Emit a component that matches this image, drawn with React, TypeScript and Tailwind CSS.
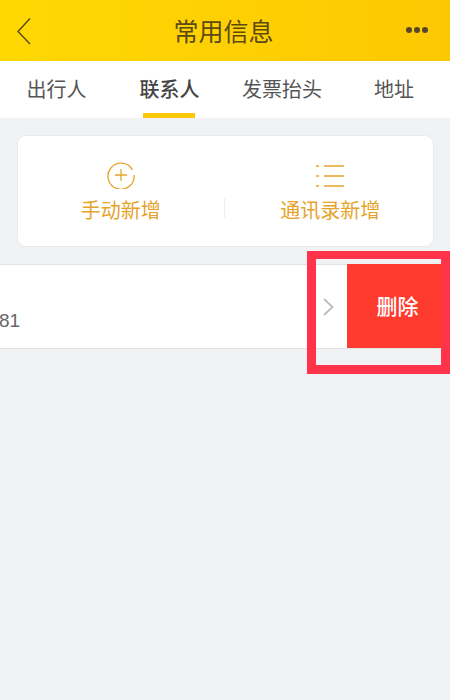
import React from "react";

const font = { fontFamily: '"Noto Sans CJK SC", "Liberation Sans", sans-serif' };

export default function App() {
  return (
    <div className="relative w-[450px] h-[700px] overflow-hidden bg-[#f1f2f4] flex flex-col" style={font}>
      <header className="h-[61px] shrink-0 bg-gradient-to-r from-[#ffd803] to-[#fdc802] flex items-center justify-between pl-[17px] pr-[22px]">
        <div className="w-[60px] flex">
          <svg width="14" height="28" viewBox="0 0 14 28" fill="none" stroke="#5a4a1a" strokeWidth="1.4">
            <path d="M13 1.5 1 14.5 13 27" />
          </svg>
        </div>
        <div className="text-[25px] leading-none text-[#5b4a12] pb-[1px] ml-[2px]">常用信息</div>
        <div className="w-[60px] flex justify-end gap-[2px] items-center pb-[2px]">
          <span className="w-[6px] h-[6px] rounded-full bg-[#54462a]" />
          <span className="w-[6px] h-[6px] rounded-full bg-[#54462a]" />
          <span className="w-[6px] h-[6px] rounded-full bg-[#54462a]" />
        </div>
      </header>

      <nav className="h-[57px] shrink-0 bg-white flex text-[20px] leading-none text-[#555555]">
        <div className="w-[113px] flex items-center justify-center pb-[1px]">出行人</div>
        <div className="relative w-[113px] flex items-center justify-center pb-[1px] text-[#444444] font-medium">
          联系人
          <span className="absolute bottom-0 left-[30px] w-[52px] h-[5px] bg-[#fcc707]" />
        </div>
        <div className="w-[112px] flex items-center justify-center pb-[1px]">发票抬头</div>
        <div className="w-[112px] flex items-center justify-center pb-[1px]">地址</div>
      </nav>

      <section className="mt-[17px] ml-[17px] w-[417px] h-[112px] bg-white border border-[#e9eaec] rounded-[9px] flex items-center text-[#e6a32a] text-[20px] leading-none">
        <div className="flex-1 flex flex-col items-center pb-[2px]">
          <svg width="28" height="28" viewBox="0 0 30 30" fill="none" stroke="#e6a32a" strokeWidth="1.4" className="mt-[1px]">
            <path d="M27.3 9.5A14 14 0 1 0 29 15" />
            <path d="M15 8.5v13M8.5 15h13" />
          </svg>
          <div className="mt-[11px]">手动新增</div>
        </div>
        <div className="w-px h-[20px] bg-[#eeeeee] mt-[33px]" />
        <div className="flex-1 flex flex-col items-center pt-[3px] pl-[3px]">
          <svg width="30" height="22" viewBox="0 0 30 22" fill="none" stroke="#e6a32a" strokeWidth="1.3">
            <path d="M1 1h3M9 1h20M1 11h3M9 11h20M1 21h3M9 21h20" />
          </svg>
          <div className="mt-[13px]">通讯录新增</div>
        </div>
      </section>

      <section className="mt-[17px] h-[85px] bg-white border-y border-[#e2e3e6] flex items-stretch">
        <div className="flex-1 flex items-end pb-[18px] text-[19px] leading-none text-[#666666] overflow-hidden">
          <span className="ml-[-1px]" style={{ fontFamily: '"Liberation Sans", sans-serif' }}>81</span>
        </div>
        <div className="w-[40px] flex items-center justify-start">
          <svg width="11" height="18" viewBox="0 0 11 18" fill="none" stroke="#bdbdbd" strokeWidth="1.8" className="mt-[1px] ml-[16px]">
            <path d="M1 1l8.5 8L1 17" />
          </svg>
        </div>
        <div className="w-[103px] mt-[-1px] bg-[#ff3b2f] flex items-center justify-center text-white text-[21px] font-medium pr-[2px] pb-[1px]">删除</div>
      </section>

      <div className="absolute left-[307px] top-[251px] w-[143px] h-[123px] border-x-[9px] border-t-[8px] border-b-[9px] border-[#ff3349]" />
    </div>
  );
}
